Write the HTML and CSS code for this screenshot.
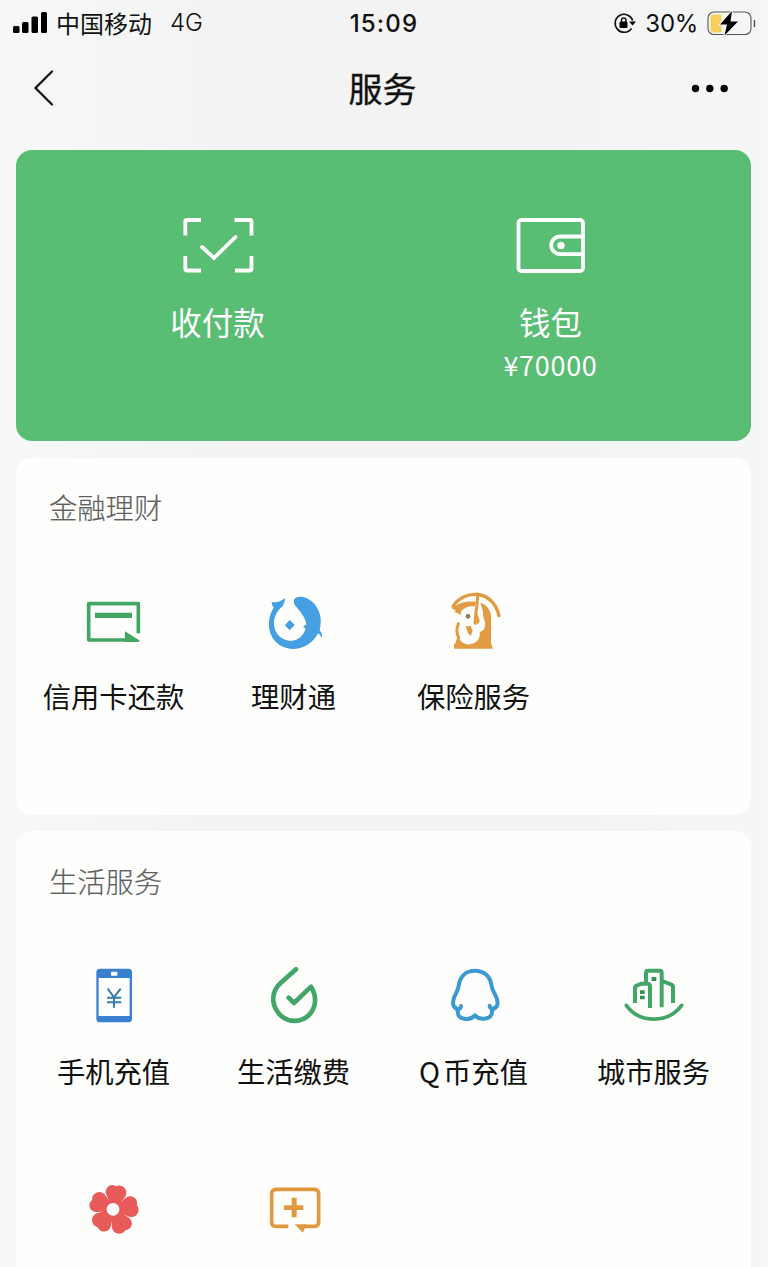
FILE: index.html
```html
<!DOCTYPE html>
<html lang="zh-CN">
<head>
    <meta charset="UTF-8">
    <meta name="viewport" content="width=device-width, initial-scale=1.0">
    <title>服务</title>
    <link rel="stylesheet" href="styles.css">
</head>
<body>
    <div class="status-bar">
        <div class="status-left">
            <svg class="signal" width="36" height="24" viewBox="0 0 36 24">
                <rect x="1" y="15" width="6.5" height="7" rx="1.5"/>
                <rect x="10" y="11" width="6.5" height="11" rx="1.5"/>
                <rect x="19.5" y="5.5" width="6.5" height="16.5" rx="1.5"/>
                <rect x="29" y="1" width="6" height="21" rx="1.5"/>
            </svg>
            <span class="carrier">中国移动</span>
            <span class="network">4G</span>
        </div>
        <div class="time">15:09</div>
        <div class="status-right">
            <svg width="24" height="24" viewBox="0 0 24 24">
                <path d="M18.5 17.5A9 9 0 1 1 19.7 9.5" fill="none" stroke="#111" stroke-width="1.6"/>
                <path d="M16 10.5h7l-3.5 4z"/>
                <rect x="6.5" y="10.5" width="8" height="6.5" rx="1.5"/>
                <path d="M8.5 11V9.3a2.2 2.2 0 0 1 4.5 0V11" fill="none" stroke="#111" stroke-width="1.5"/>
            </svg>
            <span class="percent">30%</span>
            <svg class="battery" width="50" height="28" viewBox="0 0 50 28">
                <rect x="1" y="3" width="43" height="22.5" rx="6" fill="none" stroke="#555" stroke-width="1.1"/>
                <path d="M7 5.5h7.5v18H7a3.5 3.5 0 0 1-3.5-3.5V9A3.5 3.5 0 0 1 7 5.5z" fill="#f8cf5c"/>
                <path d="M25 2L13 15.5h7L17.5 26.5 31 12.5h-7.5z" fill="#000" stroke="#f6f7f6" stroke-width="2" paint-order="stroke"/>
                <path d="M47.5 11v7" stroke="#444" stroke-width="1.3"/>
            </svg>
        </div>
    </div>

    <div class="nav-bar">
        <svg width="30" height="40" viewBox="0 0 30 40">
            <path d="M23 3.5L6.5 20 23 36.5" fill="none" stroke="#111" stroke-width="2.2" stroke-linecap="round"/>
        </svg>
        <h1>服务</h1>
        <svg width="40" height="10" viewBox="0 0 40 10">
            <circle cx="5.5" cy="5.5" r="3.7"/>
            <circle cx="19.8" cy="5.5" r="3.7"/>
            <circle cx="34.2" cy="5.5" r="3.7"/>
        </svg>
    </div>

    <div class="pay-card">
        <div class="pay-item">
            <svg width="74" height="60" viewBox="0 0 74 60">
                <g fill="none" stroke="#fff" stroke-width="3.8">
                    <path d="M4.3 19.5V5.5a1.5 1.5 0 0 1 1.5-1.5H20"/>
                    <path d="M53.5 4H69a1.5 1.5 0 0 1 1.5 1.5v14"/>
                    <path d="M4.3 40v13a1.5 1.5 0 0 0 1.5 1.5H20"/>
                    <path d="M54 54.5h15a1.5 1.5 0 0 0 1.500-1.500V40"/>
                    <path d="M21 31L33 42 54.500 21" stroke-linecap="round"/>
                </g>
            </svg>
            <span class="pay-name">收付款</span>
        </div>
        <div class="pay-item">
            <svg width="74" height="60" viewBox="0 0 74 60">
                <g fill="none" stroke="#fff" stroke-width="3.8">
                    <rect x="4.5" y="4" width="64.5" height="51" rx="3"/>
                    <path d="M68 20.500H46a8.800 8.800 0 0 0 0 17.600h22"/>
                </g>
                <circle cx="47" cy="29.500" r="3.700" fill="#fff"/>
            </svg>
            <span class="pay-name">钱包</span>
            <span class="pay-amount">¥70000</span>
        </div>
    </div>

    <div class="card finance">
        <h2>金融理财</h2>
        <div class="grid">
            <div class="item">
                <svg class="icon" viewBox="-3 0 270 240">
                    <path d="M205 160V71H56v109h110" fill="none" stroke="#44a666" stroke-width="11" stroke-linejoin="round"/>
                    <path d="M75 98h111v16H75zM165 154l45 28-6 4h-40z" fill="#44a666"/>
                </svg>
                <span>信用卡还款</span>
            </div>
            <div class="item">
                <svg class="icon" viewBox="-3 0 270 240">
                    <g fill="#449fe3">
                        <path d="M65 65c13 5 26 0 40-11-1 16-5 24-17 34-19 22-22 52-6 74 20 27 62 27 77 0 6-9 8-14 7-19l-6 1c1-6 4-9 9-10-2-19-14-34-29-52-14-15-11-31 10-32 26 0 52 22 60 54 4 18 2 33-1 47 6 7 8 15 6 24-2-7-5-11-11-15-14 27-39 45-72 47-42 0-71-28-75-66-2-21 3-40 14-58-4-6-6-12-6-18z"/>
                        <path d="M119 123l12 12-12 12-11-11z" stroke="#449fe3" stroke-width="5" stroke-linejoin="round"/>
                    </g>
                </svg>
                <span>理财通</span>
            </div>
            <div class="item">
                <svg class="icon" viewBox="-3 0 270 240">
                    <g fill="none" stroke="#e29b42" stroke-width="9" stroke-linecap="round">
                        <path d="M69 79c33-52 120-52 138 28" stroke-width="10"/>
                        <path d="M143 42c0 35-7 55-8 88"/>
                        <path d="M85 131c-6 15-5 30 1 42l-5 16"/>
                    </g>
                    <g fill="#e29b42">
                        <path d="M65 87c17-17 41-25 73-22l-3 14c-17-2-28 1-40 13-3 4-3 8-3 13l-11-7-9-1 6-6z"/>
                        <path d="M152 68c17 6 31 22 31 42v80l6 16H72v-14c9-4 14-8 17-14 9 15 23 17 35 14 18-4 28-18 25-36 13-3 18-15 16-28-2-12-7-18-6-28 1-13-7-22-7-32z"/>
                        <path d="M107 139l15-1 6 14-6 16-8-8z"/>
                        <path d="M141 100l-2 34c8-3 11-9 9-16-2-7-5-11-7-18z"/>
                    </g>
                    <circle cx="114" cy="109" r="7" fill="#8c795c"/>
                </svg>
                <span>保险服务</span>
            </div>
        </div>
    </div>

    <div class="card life">
        <h2>生活服务</h2>
        <div class="grid">
            <div class="item">
                <svg class="icon" viewBox="-3 0 270 240">
                    <rect x="79" y="41" width="107" height="161" rx="11" fill="#3b80cf"/>
                    <path d="M86 69h93v114H86z" fill="#fff"/>
                    <rect x="123" y="50" width="19" height="12" rx="2" fill="#fff"/>
                    <path d="M113 101l19 26 20-26M132 125v33M111 128h43M111 142h43" fill="none" stroke="#347da9" stroke-width="6"/>
                </svg>
                <span>手机充值</span>
            </div>
            <div class="item">
                <svg class="icon" viewBox="-3 0 270 240">
                    <path d="M138 43L91 85c-26 24-28 60-7 87 24 34 74 34 98 2 17-22 18-52 1-79l-51 49-16-16" fill="none" stroke="#43a568" stroke-width="14" stroke-linecap="round" stroke-linejoin="round"/>
                </svg>
                <span>生活缴费</span>
            </div>
            <div class="item">
                <svg class="icon" viewBox="-3 0 270 240">
                    <path d="M93 153c-1 11-13 12-17 6-10-7-9-26 3-46 4-8 6-13 7-21 4-28 22-45 49-45s47 17 50 47c1 8 4 13 9 22 11 20 11 36 3 42-6 6-17 3-18-6M79 160c3 6 6 9 5 12-2 22 36 26 51 9 15 17 53 12 51-11-1-4 4-7 8-12" fill="none" stroke="#3d99d0" stroke-width="12" stroke-linecap="round" stroke-linejoin="round"/>
                </svg>
                <span class="qcoin"><span class="q">Q</span>币充值</span>
            </div>
            <div class="item">
                <svg class="icon" viewBox="-3 0 270 240">
                    <g fill="none" stroke="#43a568" stroke-width="12" stroke-linejoin="round">
                        <path d="M75 144V99q0-5 5-7l15-6h19q6 2 6 8v65M108 84V53q0-6 6-6h35q6 0 6 6v104M157 78l27 11q5 2 5 7v48"/>
                        <path d="M49 151c39 55 125 55 166 0" stroke-width="11" stroke-linecap="round"/>
                    </g>
                    <path d="M125 66h14v12h-14zM90 106h14v11H90zM90 122h14v11H90z" fill="#368d56"/>
                </svg>
                <span>城市服务</span>
            </div>
            <div class="item">
                <svg class="icon" viewBox="-3 0 270 240">
                    <defs>
                        <path id="petal" d="M-12-14L-28-41C-39-60-20-80-2-71 14-81 38-66 29-43L12-14z"/>
                    </defs>
                    <g transform="translate(131 119) rotate(8)" fill="#e95b5a">
                        <circle r="33"/>
                        <use href="#petal"/>
                        <use href="#petal" transform="rotate(72)"/>
                        <use href="#petal" transform="rotate(144)"/>
                        <use href="#petal" transform="rotate(216)"/>
                        <use href="#petal" transform="rotate(288)"/>
                    </g>
                    <circle cx="129" cy="118" r="19" fill="#fff"/>
                </svg>
            </div>
            <div class="item">
                <svg class="icon" viewBox="-3 0 270 240">
                    <path d="M115 169H79q-14 0-14-14V72q0-14 14-14h113q14 0 14 14v83q0 14-14 14h-30" fill="none" stroke="#e0993f" stroke-width="11"/>
                    <path d="M134 163h35l-5 12-5 13zM125 83h15v23h20v14h-20v22h-15v-22h-23v-14h23z" fill="#e0993f"/>
                </svg>
            </div>
        </div>
    </div>
</body>
</html>
```
FILE: styles.css
```css
* {
    box-sizing: border-box;
}
body {
    font-family: "Noto Sans CJK SC", sans-serif;
    background: linear-gradient(90deg, #f7f9f9, #f2f3f2 30%, #f2f3f2 70%, #f5f7f7);
    color: #111;
    margin: 0;
    padding: 0 17px 0 16px;
    height: 1267px;
    overflow: hidden;
}
.status-bar {
    display: grid;
    grid-template-columns: 1fr auto 1fr;
    align-items: center;
    height: 46px;
    margin: 0 -17px 0 -4px;
    font-size: 24px;
    line-height: 44px;
}
.status-left,
.status-right {
    display: flex;
    align-items: center;
    height: 44px;
}
.status-right {
    justify-content: flex-end;
    padding-right: 11px;
}
.carrier {
    margin-left: 8px;
}
.network {
    font-family: Inter, sans-serif;
    font-weight: 300;
    margin-left: 18px;
}
.time {
    font-family: Inter, sans-serif;
    font-weight: 500;
    letter-spacing: 1.2px;
    margin: 2px 12px 0 0;
}
.percent {
    font-family: Inter, sans-serif;
    margin: 1px 9px 0 8px;
    letter-spacing: -0.3px;
}
.nav-bar {
    display: flex;
    justify-content: space-between;
    align-items: center;
    height: 84px;
    padding: 0 21px 0 13px;
}
.nav-bar h1 {
    font-size: 34px;
    font-weight: 400;
    -webkit-text-stroke: 0.3px #111;
    margin: -2px 0 0 16px;
}
.pay-card {
    display: flex;
    height: 291px;
    margin-top: 20px;
    padding: 66px 34px 0 35px;
    background-color: #59bd74;
    border-radius: 16px;
    color: #fff;
}
.pay-item {
    flex: 1;
    display: flex;
    flex-direction: column;
    align-items: center;
}
.pay-name {
    font-size: 31.5px;
    line-height: 40px;
    margin-top: 25px;
}
.pay-amount {
    font-size: 27px;
    line-height: 36px;
    letter-spacing: 0.7px;
    margin-top: 6px;
}
.card {
    height: 357px;
    margin-top: 17px;
    padding-top: 29px;
    background-color: #fefefc;
    border-radius: 16px;
}
.card h2 {
    font-size: 28.3px;
    font-weight: 300;
    -webkit-text-stroke: 0.2px #666;
    line-height: 40px;
    color: #5f5f5f;
    margin: 0 0 53px 33px;
}
.grid {
    display: grid;
    grid-template-columns: repeat(4, 180px);
    margin-left: 7.5px;
}
.item {
    display: flex;
    flex-direction: column;
    align-items: center;
    font-size: 28.3px;
    line-height: 40px;
}
.icon {
    width: 90px;
    height: 80px;
    margin-bottom: 16px;
}
.q {
    margin-right: 3px;
}
.life {
    height: 436px;
    margin-top: 16px;
    padding-top: 30px;
    border-radius: 16px 16px 0 0;
}
.life h2 {
    margin-bottom: 54px;
}
.life .grid {
    grid-template-rows: 215px 96px;
}
```
